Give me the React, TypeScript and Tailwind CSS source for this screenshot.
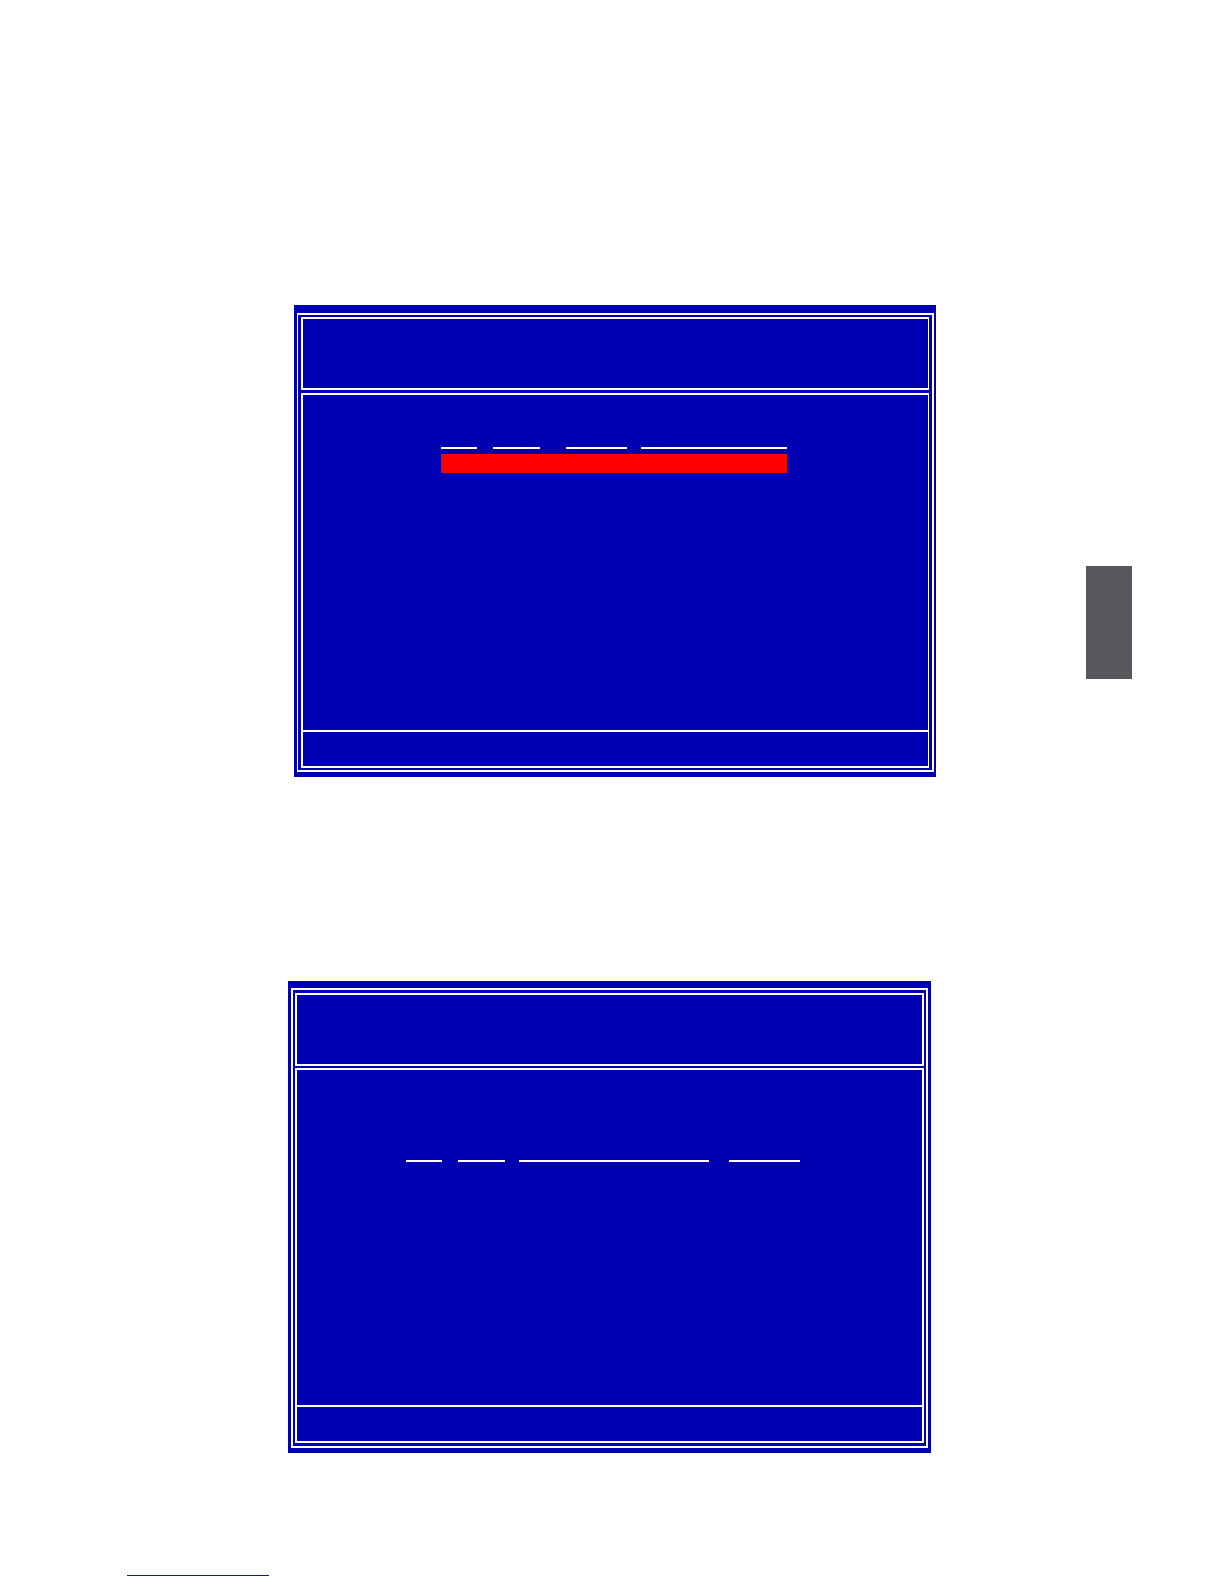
interface Rule {
  width: string;
  gap: string;
}

interface IpropScreen {
  className: string;
  frame: string;
  inner: string;
  rules: Rule[];
  body: string;
  selected?: boolean;
}

const bootRules: Rule[] = [
  { width: 'w-9', gap: 'mr-4' },
  { width: 'w-[47px]', gap: 'mr-[26px]' },
  { width: 'w-[61px]', gap: 'mr-[14px]' },
  { width: 'w-[146px]', gap: '' },
];

const deviceRules: Rule[] = [
  { width: 'w-9', gap: 'mr-4' },
  { width: 'w-[47px]', gap: 'mr-[14px]' },
  { width: 'w-[190px]', gap: 'mr-5' },
  { width: 'w-[71px]', gap: '' },
];

// Blue text-mode screen: header box, list area and footer bar
function Screen({ className, frame, inner, rules, body, selected }: IpropScreen) {
  return (
    <section className={`bg-[#0000b3] ${className}`}>
      <div className={`border-white ${frame}`}>
        <header className={`h-[73px] border-2 border-white ${inner}`} />
        <div className={`border-2 border-white ${inner}`}>
          <div className={`h-[335px] ${body}`}>
            <div className="w-fit">
              <div className="flex">
                {rules.map((rule, index) => (
                  <span
                    key={index}
                    className={`h-0.5 bg-white ${rule.width} ${rule.gap}`}
                  />
                ))}
              </div>
              {selected && <div className="mt-[5px] h-[19px] bg-[#ff0000]" />}
            </div>
          </div>
          <footer className="h-9 border-t-2 border-white" />
        </div>
      </div>
    </section>
  );
}

function App() {
  return (
    <div className="min-h-screen bg-white pt-[305px] pb-2 font-['Liberation_Sans',sans-serif]">
      <div className="flex items-start pl-[288px] pr-[92px]">
        <main className="flex-1">
          <Screen
            className="ml-1.5 pt-2 pr-0.5 pb-[5px] pl-[3px]"
            frame="flex flex-col gap-[3px] border-2 border-l px-[3px] py-0.5"
            inner="border-r"
            rules={bootRules}
            body="pt-[52px] pl-[138px]"
            selected
          />
          <Screen
            className="mt-[204px] mr-[5px] px-[3px] pt-[7px] pb-[5px]"
            frame="flex flex-col gap-0.5 border-2 px-0.5 py-[3px]"
            inner=""
            rules={deviceRules}
            body="pt-[90px] pl-[109px]"
          />
        </main>
        <aside className="mt-[261px] ml-[150px] h-[113px] w-[46px] bg-[#56585b]" />
      </div>
      <hr className="mt-[122px] ml-[127px] h-px w-[142px] border-0 bg-[#0c14a4]" />
    </div>
  );
}

export default App;
